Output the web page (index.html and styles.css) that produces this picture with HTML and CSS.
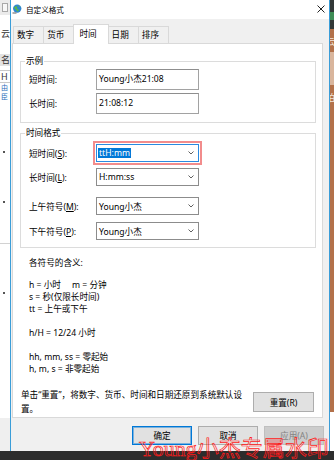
FILE: index.html
```html
<!DOCTYPE html>
<html lang="zh-CN">
<head>
    <meta charset="UTF-8">
    <meta name="viewport" content="width=device-width, initial-scale=1.0">
    <title>自定义格式</title>
    <link rel="stylesheet" href="styles.css">
</head>
<body>
    <div class="screen">
        <!-- Window behind, left edge -->
        <div class="side side-left">
            <div class="bg-bar"><span class="bg-check"></span></div>
            <div class="bg-frag bg-frag-first">云</div>
            <div class="bg-frag bg-frag-box">名</div>
            <div class="bg-frag bg-frag-field">H</div>
            <div class="bg-frag bg-frag-link">由</div>
            <div class="bg-frag bg-frag-link">臣</div>
            <div class="bg-tick bg-tick-a"></div>
            <div class="bg-tick"></div>
            <div class="bg-rule"></div>
            <div class="bg-tick"></div>
            <div class="bg-foot"></div>
        </div>

        <!-- Dialog -->
        <div class="dialog">
            <div class="titlebar">
                <svg class="app-icon" viewBox="0 0 10 10" width="10" height="10">
                    <circle cx="5.2" cy="4.6" r="4.2" fill="#2f86d1"/>
                    <path d="M2.2 3.2c.9-1 2.4-1.3 3-.4.4.7-.5 1.2-.1 1.9.4.7 1.5.4 1.7 1.4.1.7-.6 1.3-1.3 1.6-.3-.8-1.1-1-1.2-1.8-.1-.7-1.2-.8-1.6-1.5-.3-.4-.4-.9-.5-1.2z" fill="#58b948"/>
                    <path d="M6.3 1.2c.9.2 1.8.9 2.2 1.8-.6.1-1.1-.2-1.4-.6-.3-.4-.8-.6-.8-1.2z" fill="#58b948"/>
                    <rect x="0.5" y="8.3" width="4" height="1.4" fill="#8a8a8a"/>
                </svg>
                <span class="title">自定义格式</span>
                <svg class="close" viewBox="0 0 8 8" width="8" height="8">
                    <path d="M0.5 0.5L7.5 7.5M7.5 0.5L0.5 7.5" stroke="#222" stroke-width="1" fill="none"/>
                </svg>
            </div>

            <div class="tabs">
                <span class="tab">数字</span>
                <span class="tab">货币</span>
                <span class="tab tab-active">时间</span>
                <span class="tab">日期</span>
                <span class="tab">排序</span>
            </div>

            <div class="panel">
                <fieldset class="group group-sample">
                    <legend>示例</legend>
                    <div class="row">
                        <span class="label">短时间:</span>
                        <div class="textbox">Young小杰21:08</div>
                    </div>
                    <div class="row row-tight">
                        <span class="label">长时间:</span>
                        <div class="textbox">21:08:12</div>
                    </div>
                </fieldset>

                <fieldset class="group group-format">
                    <legend>时间格式</legend>
                    <div class="row">
                        <span class="label">短时间(<u>S</u>):</span>
                        <div class="combo combo-focus">
                            <span class="combo-value"><span class="selected">ttH:mm</span></span>
                            <svg class="chevron" viewBox="0 0 6 4" width="6" height="4"><path d="M0.5 0.5L3 3L5.5 0.5" stroke="#606060" fill="none"/></svg>
                        </div>
                    </div>
                    <div class="row row-gap-s">
                        <span class="label">长时间(<u>L</u>):</span>
                        <div class="combo">
                            <span class="combo-value">H:mm:ss</span>
                            <svg class="chevron" viewBox="0 0 6 4" width="6" height="4"><path d="M0.5 0.5L3 3L5.5 0.5" stroke="#606060" fill="none"/></svg>
                        </div>
                    </div>
                    <div class="row row-gap-l">
                        <span class="label">上午符号(<u>M</u>):</span>
                        <div class="combo">
                            <span class="combo-value">Young小杰</span>
                            <svg class="chevron" viewBox="0 0 6 4" width="6" height="4"><path d="M0.5 0.5L3 3L5.5 0.5" stroke="#606060" fill="none"/></svg>
                        </div>
                    </div>
                    <div class="row row-gap-m">
                        <span class="label">下午符号(<u>P</u>):</span>
                        <div class="combo">
                            <span class="combo-value">Young小杰</span>
                            <svg class="chevron" viewBox="0 0 6 4" width="6" height="4"><path d="M0.5 0.5L3 3L5.5 0.5" stroke="#606060" fill="none"/></svg>
                        </div>
                    </div>
                </fieldset>

                <div class="symbols">
                    <p class="symbols-title">各符号的含义:</p>
                    <p>h = 小时     m = 分钟</p>
                    <p>s = 秒(仅限长时间)</p>
                    <p>tt = 上午或下午</p>
                    <p>&nbsp;</p>
                    <p>h/H = 12/24 小时</p>
                    <p>&nbsp;</p>
                    <p>hh, mm, ss = 零起始</p>
                    <p>h, m, s = 非零起始</p>
                </div>

                <div class="reset-row">
                    <p class="reset-note">单击“重置”，将数字、货币、时间和日期还原到系统默认设<br>置。</p>
                    <button class="btn btn-reset">重置(R)</button>
                </div>
            </div>

            <div class="footer">
                <button class="btn btn-default">确定</button>
                <button class="btn">取消</button>
                <button class="btn btn-disabled">应用(A)</button>
            </div>
        </div>

        <!-- Desktop behind, right edge -->
        <div class="side side-right">
            <div class="rs-top"><span class="rs-icon"></span></div>
            <div class="rs-wall">
                <span class="rs-text">云</span>
                <span class="rs-band"></span>
                <span class="rs-text">拍</span>
            </div>
            <div class="rs-foot"></div>
        </div>
    </div>

    <div class="watermark">Young小杰专属水印</div>
</body>
</html>
```

FILE: styles.css
```css
/* Base */
* {
    box-sizing: border-box;
}

body {
    margin: 0;
    width: 334px;
    height: 460px;
    overflow: hidden;
    position: relative;
    background: #2d2d2d;
    font-family: "Noto Sans", "Noto Sans CJK SC", sans-serif;
    font-size: 8.6px;
    color: #000;
}

p {
    margin: 0;
}

.screen {
    display: flex;
    height: 451px;
}

/* Window behind (left) */
.side-left {
    width: 10px;
    background: #fff;
    overflow: hidden;
    display: flex;
    flex-direction: column;
}

.bg-bar {
    height: 15px;
    background: #ebebeb;
    padding: 3px 0 0 2px;
}

.bg-check {
    display: block;
    width: 6px;
    height: 9px;
    border: 1px solid #a8a8a8;
    background: #f7f7f7;
}

.bg-frag {
    height: 11px;
    line-height: 11px;
    font-size: 9px;
    text-indent: 1px;
    color: #333;
}

.bg-frag-first {
    margin-top: 13px;
}

.bg-frag-box {
    margin-top: 15px;
    background: #e3e3e3;
    height: 12px;
}

.bg-frag-field {
    margin-top: 4px;
    border-top: 1px solid #c9c9c9;
    border-bottom: 1px solid #c9c9c9;
    height: 13px;
}

.bg-frag-link {
    color: #2a6ebb;
    font-size: 7px;
    height: 9px;
    line-height: 9px;
}

.bg-tick {
    margin-top: 48px;
    width: 2px;
    height: 2px;
    margin-left: 3px;
    background: #555;
}

.bg-tick-a {
    margin-top: 50px;
}

.bg-rule {
    margin-top: 40px;
    height: 1px;
    background: #d2d2d2;
}

.bg-foot {
    margin-top: auto;
    height: 33px;
    background: #efefef;
}

/* Desktop behind (right) */
.side-right {
    width: 4px;
    display: flex;
    flex-direction: column;
}

.rs-top {
    height: 29px;
    background: #323837;
    padding-top: 12px;
}

.rs-icon {
    display: block;
    width: 4px;
    height: 8px;
    background: #3e8c55;
}

.rs-wall {
    flex: 1;
    background: #b3714a;
    display: flex;
    flex-direction: column;
    overflow: hidden;
}

.rs-text {
    color: #f3e6dc;
    font-size: 9px;
    line-height: 10px;
    text-indent: -4px;
    margin-top: 8px;
}

.rs-band {
    display: block;
    height: 33px;
    margin-top: 5px;
    background: #d9b59c;
}

.rs-foot {
    height: 39px;
    background: #fff;
}

/* Dialog frame */
.dialog {
    width: 320px;
    border-left: 1px solid #3a9dd8;
    border-right: 1px solid #3a9dd8;
    background: #f0f0f0;
    display: flex;
    flex-direction: column;
}

.titlebar {
    height: 19px;
    background: #fff;
    display: flex;
    align-items: center;
    padding: 0 4px 1px 1px;
}

.app-icon {
    margin-right: 4px;
}

.title {
    font-size: 7.6px;
}

.close {
    margin-left: auto;
}

/* Tabs */
.tabs {
    height: 24px;
    display: flex;
    align-items: flex-end;
    padding-left: 2px;
}

.tab {
    height: 17px;
    line-height: 16px;
    padding: 0 9px 0 3px;
    border: 1px solid #d9d9d9;
    border-bottom: 0;
    background: #f0f0f0;
}

.tab + .tab {
    margin-left: -1px;
}

.tab-active {
    height: 20px;
    line-height: 18px;
    margin-bottom: -1px;
    padding: 0 11px 0 5px;
    background: #fff;
    position: relative;
    z-index: 1;
}

/* Tab page */
.panel {
    flex: none;
    margin: 0 6px 0 1px;
    border: 1px solid #d9d9d9;
    background: #fff;
    padding: 0 6px 1px 7px;
}

.group {
    margin: 0;
    border: 1px solid #dcdcdc;
    padding: 2px 8px 8px;
    min-width: 0;
}

.group legend {
    margin-left: -4px;
    padding: 0 1px;
    line-height: 12px;
}

.group-sample {
    margin-top: 11px;
}

.group-format {
    margin-top: 4px;
    padding-top: 5px;
    padding-bottom: 7px;
}

.row {
    display: flex;
    align-items: center;
}

.row-tight {
    margin-top: 3px;
}

.row-gap-s {
    margin-top: 6px;
}

.row-gap-m {
    margin-top: 7px;
}

.row-gap-l {
    margin-top: 11px;
}

.label {
    width: 67px;
    flex: none;
}

.label u {
    text-underline-offset: 1px;
}

.textbox {
    width: 103px;
    height: 21px;
    border: 1px solid #a2a2a2;
    border-top-color: #8e8e8e;
    padding: 3px 0 0 2px;
    line-height: 12px;
}

.combo {
    width: 103px;
    height: 18px;
    border: 1px solid #8c8c8c;
    display: flex;
    align-items: center;
    padding: 0 4px 0 1px;
}

.combo-value {
    flex: 1;
    padding-left: 1px;
}

.combo-focus {
    border-color: #2a8ae0;
    outline: 2px solid #f28c8c;
    outline-offset: 1px;
}

.selected {
    display: inline-block;
    background: #0078d7;
    color: #fff;
    line-height: 10px;
    padding: 0 1px;
    margin-left: -1px;
}

/* Symbol help */
.symbols {
    margin: 9px 0 0 9px;
    line-height: 12px;
}

.symbols p {
    white-space: pre;
}

.symbols .symbols-title {
    margin-bottom: 10px;
}

/* Reset */
.reset-row {
    display: flex;
    align-items: flex-start;
    margin: 13px 2px 0 1px;
}

.reset-note {
    width: 226px;
    flex: none;
    line-height: 14px;
    white-space: nowrap;
}

.btn {
    font-family: inherit;
    font-size: inherit;
    color: #000;
    width: 60px;
    height: 19px;
    padding: 0;
    background: #e1e1e1;
    border: 1px solid #adadad;
}

.btn-reset {
    margin: 4px 0 0 auto;
    width: 61px;
    height: 20px;
}

/* Footer */
.footer {
    display: flex;
    justify-content: flex-end;
    gap: 6px;
    margin-top: 8px;
    padding-right: 5px;
}

.btn-default {
    border-color: #0078d7;
    box-shadow: inset 0 0 0 1px rgba(0, 120, 215, 0.45);
}

.btn-disabled {
    background: #cccccc;
    border-color: #bfbfbf;
    color: #838383;
}

/* Watermark over the capture */
.watermark {
    position: absolute;
    left: 139px;
    top: 438px;
    font-family: "Liberation Serif", "Noto Sans CJK SC", serif;
    font-size: 22px;
    line-height: 22px;
    white-space: nowrap;
    color: transparent;
    -webkit-text-stroke: 0.7px #ff1a1a;
}
```
